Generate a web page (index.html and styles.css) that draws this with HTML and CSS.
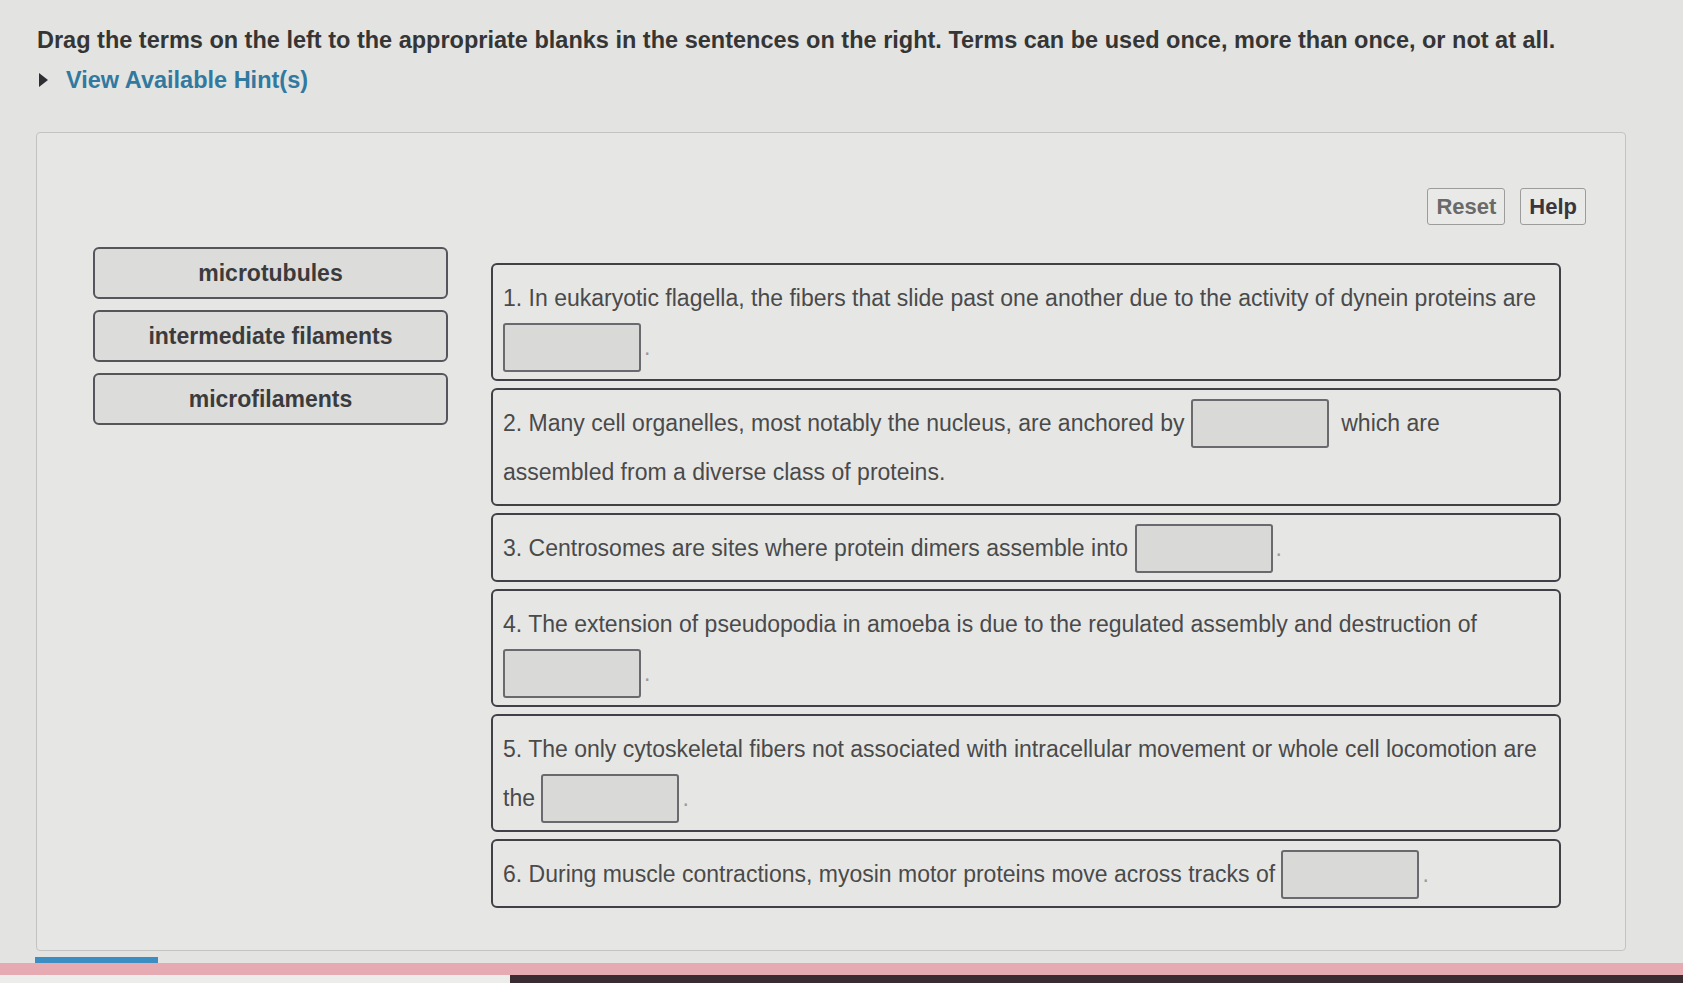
FILE: index.html
```html
<!DOCTYPE html>
<html lang="en">
<head>
<meta charset="utf-8">
<title>Drag the terms</title>
<link rel="stylesheet" href="styles.css">
</head>
<body>
<div class="page">
  <p class="instructions">Drag the terms on the left to the appropriate blanks in the sentences on the right. Terms can be used once, more than once, or not at all.</p>
  <div class="hints"><span class="caret"></span><span class="hints-link">View Available Hint(s)</span></div>

  <div class="panel">
    <div class="toolbar">
      <button class="btn btn-reset">Reset</button>
      <button class="btn btn-help">Help</button>
    </div>
    <div class="workspace">
      <div class="terms">
        <div class="term">microtubules</div>
        <div class="term">intermediate filaments</div>
        <div class="term">microfilaments</div>
      </div>
      <div class="sentences">
        <div class="sentence">1. In eukaryotic flagella, the fibers that slide past one another due to the activity of dynein proteins are<br><span class="blank"></span><span class="dot">.</span></div>
        <div class="sentence">2. Many cell organelles, most notably the nucleus, are anchored by <span class="blank blank-mid"></span> which are<br>assembled from a diverse class of proteins.</div>
        <div class="sentence">3. Centrosomes are sites where protein dimers assemble into <span class="blank"></span><span class="dot">.</span></div>
        <div class="sentence">4. The extension of pseudopodia in amoeba is due to the regulated assembly and destruction of<br><span class="blank"></span><span class="dot">.</span></div>
        <div class="sentence">5. The only cytoskeletal fibers not associated with intracellular movement or whole cell locomotion are<br>the <span class="blank"></span><span class="dot">.</span></div>
        <div class="sentence">6. During muscle contractions, myosin motor proteins move across tracks of <span class="blank"></span><span class="dot">.</span></div>
      </div>
    </div>
  </div>

  <div class="footer">
    <div class="footer-accent"></div>
    <div class="footer-band"></div>
    <div class="footer-base"><div class="footer-base-left"></div><div class="footer-base-right"></div></div>
  </div>
</div>
</body>
</html>
```

FILE: styles.css
```css
html, body {
  margin: 0;
  padding: 0;
}

body {
  background: #e3e4e2;
  font-family: "Liberation Sans", Arial, sans-serif;
  color: #3a3a3a;
  width: 1683px;
  height: 983px;
  overflow: hidden;
}

.page {
  display: flex;
  flex-direction: column;
  height: 983px;
}

.instructions {
  margin: 0;
  padding: 26px 0 0 37px;
  font-size: 23.5px;
  line-height: 28px;
  font-weight: bold;
  color: #353535;
  white-space: nowrap;
}

.hints {
  margin-top: 12px;
  padding-left: 39px;
  display: flex;
  align-items: center;
  height: 28px;
}

.caret {
  width: 0;
  height: 0;
  border-left: 9px solid #2f2f33;
  border-top: 7px solid transparent;
  border-bottom: 7px solid transparent;
  margin-right: 18px;
}

.hints-link {
  font-size: 23.5px;
  font-weight: bold;
  color: #3279a0;
}

.panel {
  box-sizing: border-box;
  margin: 38px 0 0 36px;
  width: 1590px;
  height: 819px;
  border: 1px solid #c3c4c2;
  border-radius: 4px;
  background: #e6e7e5;
  padding: 55px 39px 0 56px;
}

.toolbar {
  display: flex;
  justify-content: flex-end;
  gap: 15px;
  height: 37px;
}

.btn {
  height: 37px;
  padding: 0 8px;
  font-family: "Liberation Sans", Arial, sans-serif;
  font-size: 22px;
  font-weight: bold;
  background: #e9e9e7;
  border: 1px solid #9c9c9c;
  border-radius: 3px;
}

.btn-reset {
  color: #6a6a6a;
}

.btn-help {
  color: #3a3640;
}

.workspace {
  display: flex;
  align-items: flex-start;
  margin-top: 22px;
}

.terms {
  width: 355px;
  display: flex;
  flex-direction: column;
  gap: 11px;
}

.term {
  box-sizing: border-box;
  height: 52px;
  border: 2px solid #56555c;
  border-radius: 6px;
  background: #dcdcda;
  display: flex;
  align-items: center;
  justify-content: center;
  font-size: 23px;
  font-weight: bold;
  color: #3b3b3d;
}

.sentences {
  width: 1070px;
  margin-left: 43px;
  margin-top: 16px;
  display: flex;
  flex-direction: column;
  gap: 7px;
}

.sentence {
  border: 2px solid #414047;
  border-radius: 6px;
  padding: 9px 9px 7px 10px;
  font-size: 23px;
  line-height: 49px;
  color: #4a4a4a;
}

.blank {
  display: inline-block;
  box-sizing: border-box;
  width: 138px;
  height: 49px;
  vertical-align: top;
  border: 2px solid #6a6a6e;
  border-radius: 3px;
  background: #d9dad8;
}

.blank-mid {
  margin-right: 6px;
}

.dot {
  margin-left: 3px;
  color: #9a9a9a;
}

.footer {
  margin-top: 6px;
  display: flex;
  flex-direction: column;
}

.footer-accent {
  margin-left: 35px;
  width: 123px;
  height: 6px;
  background: #3b8dc2;
}

.footer-band {
  height: 12px;
  background: #e6aab2;
}

.footer-base {
  display: flex;
  height: 8px;
}

.footer-base-left {
  width: 510px;
  background: #ececea;
}

.footer-base-right {
  flex: 1;
  background: #3a2a31;
}
```
